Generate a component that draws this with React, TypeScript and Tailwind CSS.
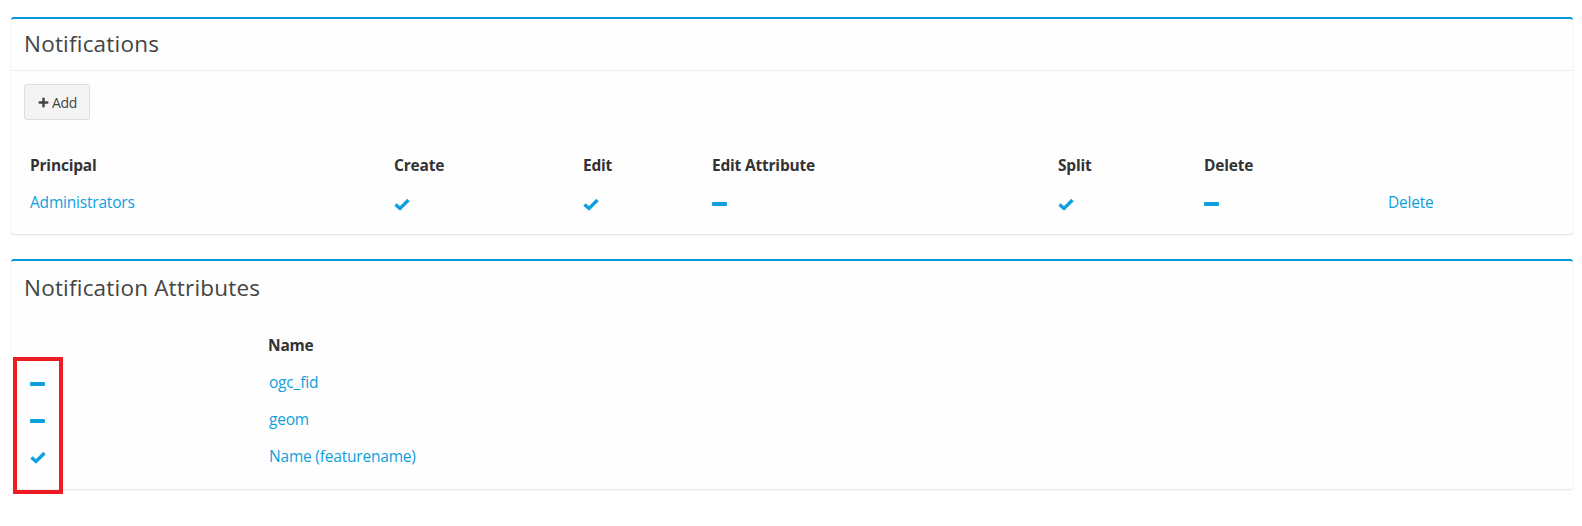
import { Plus } from 'lucide-react';

const BLUE = 'text-[#0ea0dc]';

function Check() {
  return (
    <svg width="16" height="13" viewBox="0 0 16 13" className="inline-block">
      <path d="M1.5 6.5 L6 10.5 L14.5 2" fill="none" stroke="#0ea0dc" strokeWidth="3.4" strokeLinejoin="miter" />
    </svg>
  );
}

function Minus() {
  return <span className="inline-block h-[4px] w-[15px] rounded-[1px] bg-[#0ea0dc] align-middle" />;
}

const perms = [
  { label: 'Create', w: 'w-[189px]', v: true },
  { label: 'Edit', w: 'w-[129px]', v: true },
  { label: 'Edit Attribute', w: 'w-[346px]', v: false },
  { label: 'Split', w: 'w-[146px]', v: true },
  { label: 'Delete', w: 'w-[184px]', v: false },
];

const attrs = [
  { name: 'ogc_fid', on: false },
  { name: 'geom', on: false },
  { name: 'Name (featurename)', on: true },
];

export default function App() {
  return (
    <div className="min-h-[526px] w-[1582px] bg-white pl-[11px] pr-[9px] pt-[17px] font-['Open_Sans',sans-serif] text-[#333]">
      {/* Notifications box */}
      <div className="rounded-[3px] border-t-[2px] border-[#0099da] bg-[#fefefe] shadow-[0_1px_2px_rgba(0,0,0,0.12)]">
        <div className="flex h-[52px] items-center border-b border-[#f0f0f0] px-[13px]">
          <h3 className="text-[22.5px] leading-none tracking-[0.2px] text-[#444]">Notifications</h3>
        </div>
        <div className="px-[10px] pb-[13px] pt-[13px]">
          <button className="ml-[3px] flex h-[36px] w-[66px] items-center justify-center gap-[2px] rounded-[3px] border border-[#ddd] bg-[#f4f4f4] text-[14px] tracking-[-0.3px] text-[#444]">
            <Plus size={13} strokeWidth={4.5} className="text-[#444]" />
            Add
          </button>
          <div className="mt-[27px] text-[15.5px] tracking-[-0.2px]">
            <div className="flex h-[37px] items-center font-bold text-[#333]">
              <div className="w-[364px] pl-[9px]">Principal</div>
              {perms.map((p) => (
                <div key={p.label} className={`${p.w} pl-[9px]`}>
                  {p.label}
                </div>
              ))}
              <div className="flex-1" />
            </div>
            <div className="flex h-[37px] items-center pt-[1px]">
              <div className={`w-[364px] pl-[9px] ${BLUE}`}>Administrators</div>
              {perms.map((p) => (
                <div key={p.label} className={`${p.w} pl-[9px]`}>
                  {p.v ? <Check /> : <Minus />}
                </div>
              ))}
              <div className={`flex-1 pl-[9px] ${BLUE}`}>Delete</div>
            </div>
          </div>
        </div>
      </div>

      {/* Notification Attributes box */}
      <div className="mt-[25px] rounded-[3px] border-t-[2px] border-[#0099da] bg-[#fefefe] shadow-[0_1px_2px_rgba(0,0,0,0.12)]">
        <div className="flex h-[54px] items-center px-[13px]">
          <h3 className="text-[22.5px] leading-none tracking-[0.2px] text-[#444]">Notification Attributes</h3>
        </div>
        <div className="px-[10px] pb-[14px] pt-[12px] text-[15.5px] tracking-[-0.2px]">
          <div className="flex h-[37px] items-center font-bold">
            <div className="w-[237px]" />
            <div className="pl-[10px]">Name</div>
          </div>
          <div className="relative">
            <div className="absolute left-[-8px] top-[-7px] h-[137px] w-[50px] border-[4px] border-[#ed1c24]" />
            {attrs.map((a) => (
              <div key={a.name} className="flex h-[37px] items-center">
                <div className="w-[237px] pl-[9px]">{a.on ? <Check /> : <Minus />}</div>
                <div className={`pl-[11px] ${BLUE}`}>{a.name}</div>
              </div>
            ))}
          </div>
        </div>
      </div>
    </div>
  );
}
